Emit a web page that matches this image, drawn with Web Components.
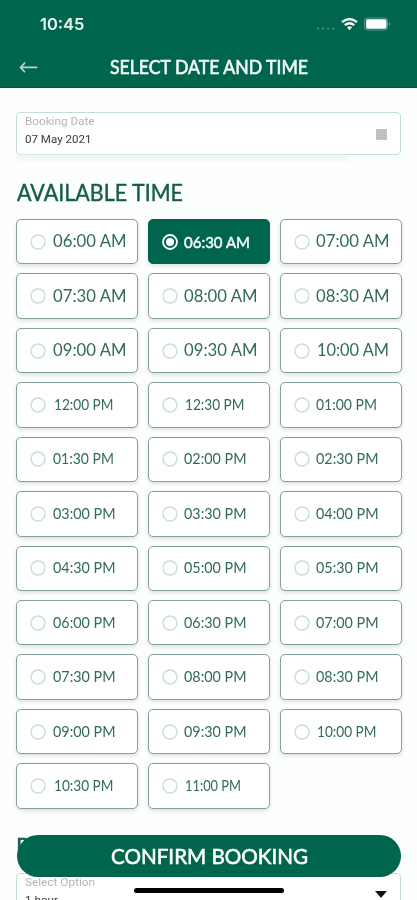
<!DOCTYPE html>
<html lang="en">
<head>
<meta charset="utf-8">
<title>Select date and time</title>
<style>
html,body{margin:0;height:900px;overflow:hidden;background:#fdfefe}
body{font-family:Lato,"Liberation Sans",sans-serif}
</style>
</head>
<body>
<booking-app></booking-app>
<script>
// Text stretched horizontally to an exact width.
class FitText extends HTMLElement {
  connectedCallback() {
    this.attachShadow({mode:'open'}).innerHTML = `<style>
      :host{display:block;white-space:pre;width:${this.getAttribute('w')}px}
      span{display:inline-block;transform-origin:0 50%}
    </style><span><slot></slot></span>`;
    this.fit();
    document.fonts.ready.then(() => this.fit());
  }
  fit() {
    const s = this.shadowRoot.querySelector('span');
    if (s.offsetWidth) {
      s.style.transform = 'none';
      s.style.transform = `scaleX(${this.getAttribute('w') / s.getBoundingClientRect().width})`;
    }
  }
}
customElements.define('fit-text', FitText);

class StatusBar extends HTMLElement {
  connectedCallback() {
    this.attachShadow({mode:'open'}).innerHTML = `<style>
      :host{display:flex;height:48px;justify-content:space-between;align-items:center;padding:0 26px 0 39.5px;color:#e9f5f0;box-sizing:border-box}
      fit-text{font:600 16.3px/20px Inter,sans-serif;margin-top:0}
    </style><fit-text w="44.5">10:45</fit-text>
    <svg width="78" height="20" viewBox="313 14 78 20">
      <g fill="#3a8871"><circle cx="318" cy="28.5" r="1.3"/><circle cx="323" cy="28.5" r="1.3"/><circle cx="328.2" cy="28.5" r="1.3"/><circle cx="333.2" cy="28.5" r="1.3"/></g>
      <g fill="none" stroke="#f2faf7" stroke-width="2.4"><path d="M342 22.2Q349.5 15.8 357 22.2"/><path d="M344.8 25.2Q349.5 21.2 354.2 25.2"/></g>
      <path d="M346.9 27.3Q349.5 25.4 352.1 27.3L349.5 30.3Z" fill="#f2faf7"/>
      <rect x="364.5" y="18" width="23" height="12" rx="3" fill="none" stroke="#5d9f8d"/>
      <rect x="366" y="19.3" width="20.5" height="9.5" rx="1.7" fill="#fff"/>
      <path d="M389 22Q391 24 389 26Z" fill="#76ae9f"/>
    </svg>`;
  }
}
customElements.define('status-bar', StatusBar);

class NavBar extends HTMLElement {
  connectedCallback() {
    this.attachShadow({mode:'open'}).innerHTML = `<style>
      :host{display:flex;height:40px;box-sizing:border-box;padding-left:19px;gap:71.5px;color:#f4faf8;font:400 18.7px/39px Lato,sans-serif;-webkit-text-stroke:.6px #f4faf8;border-bottom:1px solid #00563f}
      svg{flex:none;margin-top:12px}
    </style><svg width="19" height="14" viewBox="0 0 19 14" fill="none" stroke="#b5d6cc" stroke-width="1.6"><path d="M1.5 7.4H18.3M6 2.6L1.5 7.4L6 12.2"/></svg>
    <fit-text w="198"><slot></slot></fit-text>`;
  }
}
customElements.define('nav-bar', NavBar);

class FormField extends HTMLElement {
  connectedCallback() {
    this.attachShadow({mode:'open'}).innerHTML = `<style>
      :host{display:flex;justify-content:space-between;box-sizing:border-box;width:385px;height:43px;padding:0 13px 0 8px;border:1px solid #c2dfd7;border-radius:4px;background:#fff;font:11.6px/16px Roboto,sans-serif;color:#3b3b3b}
      .label{color:#b3b5b5;height:18px}
    </style><div><fit-text class="label" w="${this.getAttribute('lw')}">${this.getAttribute('label')}</fit-text>
    <fit-text w="${this.getAttribute('vw')}">${this.getAttribute('value')}</fit-text></div><slot></slot>`;
  }
}
customElements.define('form-field', FormField);

class TimeSlot extends HTMLElement {
  connectedCallback() {
    const t = this.getAttribute('time'), on = this.hasAttribute('selected'), am = t.endsWith('AM');
    const one = t[0] === '1';
    const w = on ? 66 : am ? (one ? 72 : 73.5) : t === '11:00 PM' ? 56 : t === '01:30 PM' || t === '01:00 PM' ? 61 : one ? 59.5 : 62.5;
    this.attachShadow({mode:'open'}).innerHTML = `<style>
      :host{display:flex;align-items:center;box-sizing:border-box;height:45.5px;padding-left:13px;border:1px solid #84a198;border-radius:5px;background:#fff;box-shadow:0 2px 4px #0000001f;color:#326b58}
      :host([selected]){background:#00654d;border-color:#00654d;color:#f7fcfa}
      svg{flex:none}
      fit-text{margin-left:${one ? 7.7 : 6.6}px;font:400 ${on ? 15.3 : am ? 16.5 : 14.5}px/20px Lato,sans-serif;margin-top:${am && !on ? -1 : 0}px;${on ? '-webkit-text-stroke:.5px #f7fcfa' : ''}}
    </style><svg width="16" height="16" viewBox="0 0 16 16" fill="none"><circle cx="8" cy="8" r="7" stroke="${on ? '#fff' : '#c5ddd5'}" stroke-width="${on ? 1.8 : 1.3}"/>${on ? '<circle cx="8" cy="8" r="4" fill="#fff"/>' : ''}</svg><fit-text w="${w}">${t}</fit-text>`;
  }
}
customElements.define('time-slot', TimeSlot);

class SlotGrid extends HTMLElement {
  connectedCallback() {
    const times = [];
    const add = (h, m, p) => times.push(`${String(h).padStart(2, '0')}:${m} ${p}`);
    for (const h of [6, 7, 8, 9]) { add(h, '00', 'AM'); add(h, '30', 'AM'); }
    add(10, '00', 'AM');
    for (const h of [12, 1, 2, 3, 4, 5, 6, 7, 8, 9, 10]) { add(h, '00', 'PM'); add(h, '30', 'PM'); }
    add(11, '00', 'PM');
    this.attachShadow({mode:'open'}).innerHTML = `<style>
      :host{display:grid;grid-template-columns:repeat(3,122px);column-gap:9.8px;grid-auto-rows:45.5px;row-gap:8.95px}
    </style>${times.map(t => `<time-slot time="${t}"${t === '06:30 AM' ? ' selected' : ''}></time-slot>`).join('')}`;
  }
}
customElements.define('slot-grid', SlotGrid);

class ConfirmButton extends HTMLElement {
  connectedCallback() {
    this.attachShadow({mode:'open'}).innerHTML = `<style>
      :host{position:absolute;left:17px;top:834.5px;width:384px;height:42.5px;border-radius:22px;background:#00654d;color:#fff;display:flex;justify-content:center;align-items:center;font:400 21.3px/26px Lato,sans-serif;-webkit-text-stroke:.6px #fff}
    </style><fit-text w="197"><slot></slot></fit-text>`;
  }
}
customElements.define('confirm-button', ConfirmButton);

class BookingApp extends HTMLElement {
  connectedCallback() {
    this.attachShadow({mode:'open'}).innerHTML = `<style>
      :host{display:block;position:relative;width:417px;height:900px;overflow:hidden}
      header{background:#00654d;height:88px}
      main{padding:24px 16px 0}
      h2{margin:0;font:400 22.5px/30px Lato,sans-serif;color:#155f48;-webkit-text-stroke:.45px #155f48}
      .first{padding:22.5px 0 11.4px .5px;height:30px}
      .second{padding-top:23px;height:41.6px}
      .shade{width:333px;height:7px;margin-bottom:-7px;background:linear-gradient(#f3f5f5,#f9fafa);filter:blur(1px)}
      .cal{margin:16px 0 0}.tri{margin:15px -1px 0 0}
      .home{position:absolute;left:134px;top:888px;width:149.5px;height:4.5px;border-radius:3px;background:#000}
    </style>
    <header><status-bar></status-bar><nav-bar>SELECT DATE AND TIME</nav-bar></header>
    <main>
      <form-field label="Booking Date" value="07 May 2021" lw="69.5" vw="66.5"><svg class="cal" width="11" height="12" viewBox="0 0 11 12"><rect width="11" height="11" rx="1" fill="#c3c3c3"/><path d="M0 1H11M1 3.5H10M1 6H10M1 8.5H10" stroke="#b5b5b5" stroke-width=".7"/></svg></form-field>
      <div class="shade"></div>
      <h2 class="first"><fit-text w="166">AVAILABLE TIME</fit-text></h2>
      <slot-grid></slot-grid>
      <h2 class="second"><fit-text w="117">DURATION</fit-text></h2>
      <form-field label="Select Option" value="1 hour" lw="70" vw="33"><svg class="tri" width="14" height="10" viewBox="0 0 14 10"><path d="M1 2H13L7.8 8Q7 9 6.2 8Z" fill="#111"/></svg></form-field>
    </main>
    <confirm-button>CONFIRM BOOKING</confirm-button>
    <div class="home"></div>`;
  }
}
customElements.define('booking-app', BookingApp);
</script>
</body>
</html>
